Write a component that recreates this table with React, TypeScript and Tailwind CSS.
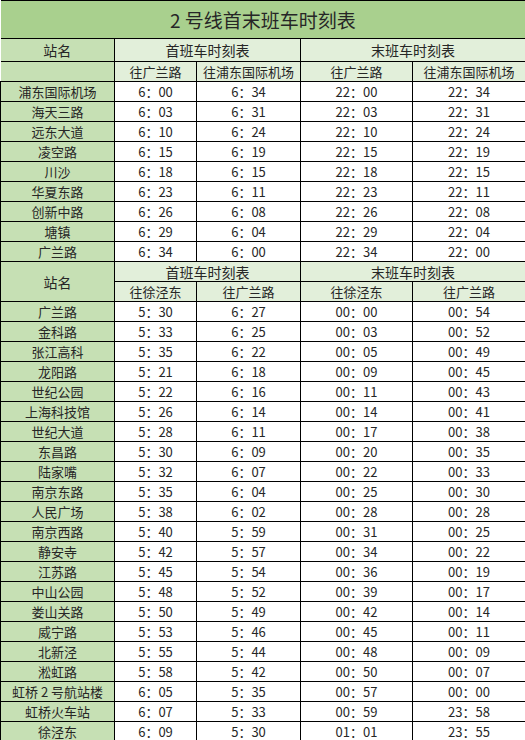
import React from 'react';

// 2号线首末班车时刻表
const upper: string[][] = [
  ['浦东国际机场', '6：00', '6：34', '22：00', '22：34'],
  ['海天三路', '6：03', '6：31', '22：03', '22：31'],
  ['远东大道', '6：10', '6：24', '22：10', '22：24'],
  ['凌空路', '6：15', '6：19', '22：15', '22：19'],
  ['川沙', '6：18', '6：15', '22：18', '22：15'],
  ['华夏东路', '6：23', '6：11', '22：23', '22：11'],
  ['创新中路', '6：26', '6：08', '22：26', '22：08'],
  ['塘镇', '6：29', '6：04', '22：29', '22：04'],
  ['广兰路', '6：34', '6：00', '22：34', '22：00'],
];

const lower: string[][] = [
  ['广兰路', '5：30', '6：27', '00：00', '00：54'],
  ['金科路', '5：33', '6：25', '00：03', '00：52'],
  ['张江高科', '5：35', '6：22', '00：05', '00：49'],
  ['龙阳路', '5：21', '6：18', '00：09', '00：45'],
  ['世纪公园', '5：22', '6：16', '00：11', '00：43'],
  ['上海科技馆', '5：26', '6：14', '00：14', '00：41'],
  ['世纪大道', '5：28', '6：11', '00：17', '00：38'],
  ['东昌路', '5：30', '6：09', '00：20', '00：35'],
  ['陆家嘴', '5：32', '6：07', '00：22', '00：33'],
  ['南京东路', '5：35', '6：04', '00：25', '00：30'],
  ['人民广场', '5：38', '6：02', '00：28', '00：28'],
  ['南京西路', '5：40', '5：59', '00：31', '00：25'],
  ['静安寺', '5：42', '5：57', '00：34', '00：22'],
  ['江苏路', '5：45', '5：54', '00：36', '00：19'],
  ['中山公园', '5：48', '5：52', '00：39', '00：17'],
  ['娄山关路', '5：50', '5：49', '00：42', '00：14'],
  ['威宁路', '5：53', '5：46', '00：45', '00：11'],
  ['北新泾', '5：55', '5：44', '00：48', '00：09'],
  ['淞虹路', '5：58', '5：42', '00：50', '00：07'],
  ['虹桥 2 号航站楼', '6：05', '5：35', '00：57', '00：00'],
  ['虹桥火车站', '6：07', '5：33', '00：59', '23：58'],
  ['徐泾东', '6：09', '5：30', '01：01', '23：55'],
];

const cell = 'border border-black text-center p-0 leading-none';
const station = `${cell} bg-[#c6e0b4] text-[13px]`;
const head = `${cell} bg-[#e2efda]`;
const time = `${cell} bg-white text-[13px]`;

function DataRows({ rows }: { rows: string[][] }) {
  return (
    <>
      {rows.map((r) => (
        <tr key={r[0]} className="h-[20px]">
          <td className={station}>{r[0]}</td>
          <td className={time}>{r[1]}</td>
          <td className={time}>{r[2]}</td>
          <td className={time}>{r[3]}</td>
          <td className={time}>{r[4]}</td>
        </tr>
      ))}
    </>
  );
}

export default function App() {
  return (
    <div className="w-[525px] bg-white overflow-hidden text-[#262626] font-['Noto_Sans_CJK_SC','Noto_Sans',sans-serif]">
      <table className="table-fixed border-collapse w-[525px]">
        <colgroup>
          <col className="w-[114px]" />
          <col className="w-[82px]" />
          <col className="w-[104px]" />
          <col className="w-[112px]" />
          <col className="w-[113px]" />
        </colgroup>
        <tbody>
          {/* title */}
          <tr className="h-[38px]">
            <td colSpan={5} className={`${cell} border-l-0 bg-[#a9d08e] text-[19px]`}>
              2 号线首末班车时刻表
            </td>
          </tr>

          {/* upper header */}
          <tr className="h-[23px]">
            <td className={`${station} text-[14px] border-l-0`}>站名</td>
            <td colSpan={2} className={`${head} text-[14px]`}>首班车时刻表</td>
            <td colSpan={2} className={`${head} text-[14px]`}>末班车时刻表</td>
          </tr>
          <tr className="h-[20px]">
            <td className={`${station} border-l-0`}></td>
            <td className={`${head} text-[13px]`}>往广兰路</td>
            <td className={`${head} text-[13px]`}>往浦东国际机场</td>
            <td className={`${head} text-[13px]`}>往广兰路</td>
            <td className={`${head} text-[13px]`}>往浦东国际机场</td>
          </tr>
          <DataRows rows={upper} />

          {/* lower header */}
          <tr className="h-[20px]">
            <td rowSpan={2} className={`${station} text-[14px]`}>站名</td>
            <td colSpan={2} className={`${head} text-[14px]`}>首班车时刻表</td>
            <td colSpan={2} className={`${head} text-[14px]`}>末班车时刻表</td>
          </tr>
          <tr className="h-[20px]">
            <td className={`${head} text-[13px]`}>往徐泾东</td>
            <td className={`${head} text-[13px]`}>往广兰路</td>
            <td className={`${head} text-[13px]`}>往徐泾东</td>
            <td className={`${head} text-[13px]`}>往广兰路</td>
          </tr>
          <DataRows rows={lower} />
        </tbody>
      </table>
    </div>
  );
}
